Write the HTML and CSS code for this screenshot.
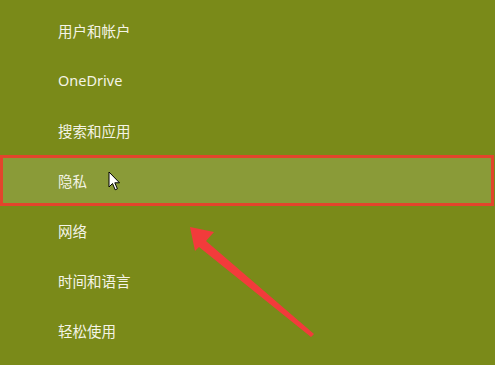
FILE: index.html
```html
<!DOCTYPE html>
<html lang="zh-CN">
<head>
<meta charset="utf-8">
<title>设置</title>
<link rel="stylesheet" href="styles.css">
</head>
<body>
<div class="page">
  <ul class="menu">
    <li class="item">用户和帐户</li>
    <li class="item">OneDrive</li>
    <li class="item">搜索和应用</li>
    <li class="item item-active">隐私</li>
    <li class="item">网络</li>
    <li class="item">时间和语言</li>
    <li class="item">轻松使用</li>
  </ul>
  <svg class="cursor" width="14" height="21" viewBox="0 0 14 21">
    <path d="M1 1 L1 16 L4.5 12.5 L7.2 18.8 L9.4 17.8 L6.8 11.8 L11.5 11.8 Z" fill="#fff" stroke="#000" stroke-width="1" stroke-linejoin="miter"/>
  </svg>
  <svg class="arrow" width="495" height="365" viewBox="0 0 495 365">
    <polygon points="190,227 214,232 206,241 314,334 311,337 199,247 195,251" fill="#f23b3b"/>
  </svg>
</div>
</body>
</html>
```
FILE: styles.css
```css
html, body {
  margin: 0;
  padding: 0;
  background: #7a8a19;
}
.page {
  position: relative;
  width: 495px;
  height: 365px;
  overflow: hidden;
  background: #7a8a19;
  font-family: "Noto Sans", "Noto Sans CJK SC", sans-serif;
}
.menu {
  list-style: none;
  margin: 0;
  padding: 5px 0 0 0;
  display: flex;
  flex-direction: column;
}
.item {
  height: 50px;
  display: flex;
  align-items: center;
  padding-left: 58px;
  color: #f4f4e6;
  font-size: 14.5px;
  box-sizing: border-box;
}
.item-active {
  height: 51px;
  margin-bottom: -1px;
  width: 494px;
  padding-left: 55px;
  border: 3px solid #e2452c;
  background: #8a9b38;
}
.cursor {
  position: absolute;
  left: 108px;
  top: 171px;
}
.arrow {
  position: absolute;
  left: 0;
  top: 0;
}
```
